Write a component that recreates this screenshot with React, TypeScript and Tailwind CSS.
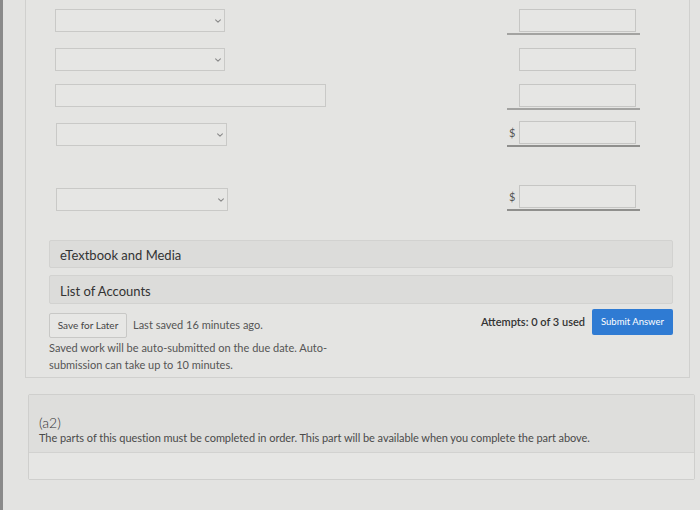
import React from 'react';

const Chevron = () => (
  <svg className="w-[8px] h-[8px] text-[#8a8a8a]" viewBox="0 0 10 10" fill="none" stroke="currentColor" strokeWidth={1.4}>
    <path d="M2 3.5l3 3 3-3" strokeLinecap="round" strokeLinejoin="round" />
  </svg>
);

function SelectBox({ width }: { width: string }) {
  return (
    <div className={`${width} h-[23px] border border-[#c9c9c7] bg-[#e6e6e4] flex items-center justify-end pr-[2px]`}>
      <Chevron />
    </div>
  );
}

function AmountCell({ dollar, line }: { dollar?: boolean; line?: 'thin' | 'thick' }) {
  return (
    <div className="w-[133px] flex flex-col">
      <div className="flex items-center h-[23px]">
        <span className="w-[12px] pl-[2px] pt-[2px] text-[11px] text-[#555]">{dollar ? '$' : ''}</span>
        <div className="w-[117px] h-[23px] border border-[#c6c6c4] bg-[#e6e6e4]" />
      </div>
      {line === 'thin' && <div className="mt-[1px] h-[2px] bg-[#a3a3a1]" />}
      {line === 'thick' && <div className="mt-[1px] h-[2px] bg-[#8f8f8d]" />}
    </div>
  );
}

export default function App() {
  return (
    <div className="w-[700px] h-[510px] bg-[#e3e3e1] flex overflow-hidden font-['Lato',sans-serif] text-[#3d3d3d]">
      <div className="w-[3px] bg-[#8a8a8a]" />
      <div className="flex-1 pl-[22px]">
        {/* Question panel */}
        <div className="w-[665px] h-[378px] border-x border-b border-[#d0d0ce] bg-[#e4e4e2] flex flex-col">
          {/* Row 1 */}
          <div className="mt-[9px] flex items-start">
            <div className="ml-[29px]"><SelectBox width="w-[170px]" /></div>
            <div className="ml-[282px]"><AmountCell line="thin" /></div>
          </div>
          {/* Row 2 */}
          <div className="mt-[13px] flex items-start">
            <div className="ml-[29px]"><SelectBox width="w-[170px]" /></div>
            <div className="ml-[282px]"><AmountCell /></div>
          </div>
          {/* Row 3 */}
          <div className="mt-[13px] flex items-start">
            <div className="ml-[29px] w-[271px] h-[23px] border border-[#c9c9c7] bg-[#e6e6e4]" />
            <div className="ml-[181px]"><AmountCell line="thin" /></div>
          </div>
          {/* Row 4 */}
          <div className="mt-[11px] flex items-start">
            <div className="ml-[30px] mt-[2px]"><SelectBox width="w-[171px]" /></div>
            <div className="ml-[280px]"><AmountCell dollar line="thick" /></div>
          </div>
          {/* Row 5 */}
          <div className="mt-[38px] flex items-start">
            <div className="ml-[30px] mt-[3px]"><SelectBox width="w-[172px]" /></div>
            <div className="ml-[279px]"><AmountCell dollar line="thick" /></div>
          </div>

          {/* Resource bars */}
          <div className="ml-[23px] mt-[29px] w-[624px] h-[28px] rounded-[2px] border border-[#d2d2d0] bg-[#dcdcda] flex items-center pl-[10px] pt-[4px] text-[13px] text-[#333]">
            eTextbook and Media
          </div>
          <div className="ml-[23px] mt-[7px] w-[624px] h-[29px] rounded-[2px] border border-[#d2d2d0] bg-[#dcdcda] flex items-center pl-[10px] pt-[4px] text-[13px] text-[#333]">
            List of Accounts
          </div>

          {/* Save / submit row */}
          <div className="ml-[23px] mt-[4px] w-[624px] flex justify-between items-start">
            <div className="flex flex-col">
              <div className="mt-[5px] flex items-center">
                <div className="w-[78px] h-[25px] border border-[#c8c8c6] bg-[#e7e7e5] rounded-[2px] flex items-center justify-center text-[10px] text-[#444]">
                  Save for Later
                </div>
                <span className="ml-[6px] text-[11px] text-[#555]">Last saved 16 minutes ago.</span>
              </div>
              <p className="mt-[1px] w-[290px] text-[11px] leading-[17px] text-[#555]">
                Saved work will be auto-submitted on the due date. Auto-
                <br />
                submission can take up to 10 minutes.
              </p>
            </div>
            <div className="flex items-center mt-[1px]">
              <span className="text-[11px] font-semibold text-[#333]">Attempts: 0 of 3 used</span>
              <button className="ml-[7px] w-[81px] h-[26px] rounded-[2px] bg-[#2f7bd3] text-white text-[9.5px]">
                Submit Answer
              </button>
            </div>
          </div>
        </div>

        {/* Part a2 */}
        <div className="ml-[3px] mt-[16px] w-[667px] border border-[#cfcfcd] rounded-[2px] flex flex-col">
          <div className="h-[58px] bg-[#dededc] pl-[10px] pt-[19px] border-b border-[#d2d2d0]">
            <div className="text-[14px] leading-[17px] font-light text-[#333]">(a2)</div>
            <div className="text-[11px] leading-[13px] tracking-[-0.05px] text-[#4a4a4a]">
              The parts of this question must be completed in order. This part will be available when you complete the part above.
            </div>
          </div>
          <div className="h-[26px] bg-[#e6e6e4]" />
        </div>
      </div>
    </div>
  );
}
